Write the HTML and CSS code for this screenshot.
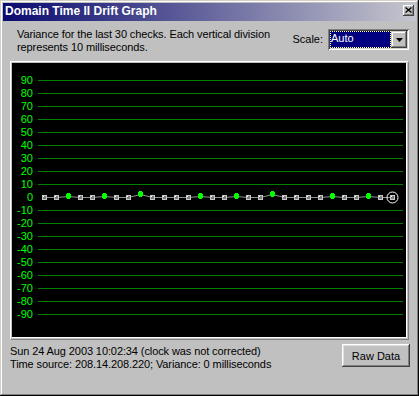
FILE: index.html
```html
<!DOCTYPE html>
<html>
<head>
<meta charset="utf-8">
<link rel="stylesheet" href="styles.css">
</head>
<body>
<div class="window">
  <div class="titlebar">
    <span class="title">Domain Time II Drift Graph</span>
    <span class="close-btn"><svg width="7" height="6" viewBox="0 0 7 6"><path d="M0.5 0.5 L6.5 5.5 M6.5 0.5 L0.5 5.5" stroke="#000" stroke-width="1.3" fill="none"/></svg></span>
  </div>
  <div class="content">
    <div class="header">
      <p class="desc">Variance for the last 30 checks. Each vertical division<br>represents 10 milliseconds.</p>
      <div class="scale">
        <span class="scale-label">Scale:</span>
        <div class="combo">
          <div class="combo-value">Auto</div>
          <div class="combo-btn"><svg width="7" height="4" viewBox="0 0 7 4"><path d="M0 0 H7 L3.5 4 Z" fill="#000"/></svg></div>
        </div>
      </div>
    </div>
    <div class="graph-frame">
      <div class="graph">
        <svg class="plot" width="394" height="274" viewBox="0 0 394 274">
          <defs>
            <g id="sq">
              <rect x="-2" y="-2" width="5" height="5" fill="#c8c8c8"/>
              <rect x="-1" y="-1" width="3" height="3" fill="#7a7a7a"/>
              <rect x="-1" y="-1" width="1" height="1" fill="#ffffff"/>
            </g>
            <g id="gp">
              <rect x="-2" y="-2" width="5" height="4" fill="#00ff00"/>
              <rect x="-1" y="-3" width="3" height="6" fill="#00ff00"/>
            </g>
          </defs>
          <g class="grid" stroke="#008000" stroke-width="1" shape-rendering="crispEdges">
            <line x1="26" y1="17.5" x2="391" y2="17.5"/>
            <line x1="26" y1="30.5" x2="391" y2="30.5"/>
            <line x1="26" y1="43.5" x2="391" y2="43.5"/>
            <line x1="26" y1="56.5" x2="391" y2="56.5"/>
            <line x1="26" y1="69.5" x2="391" y2="69.5"/>
            <line x1="26" y1="82.5" x2="391" y2="82.5"/>
            <line x1="26" y1="95.5" x2="391" y2="95.5"/>
            <line x1="26" y1="108.5" x2="391" y2="108.5"/>
            <line x1="26" y1="121.5" x2="391" y2="121.5"/>
            <line x1="26" y1="147.5" x2="391" y2="147.5"/>
            <line x1="26" y1="160.5" x2="391" y2="160.5"/>
            <line x1="26" y1="173.5" x2="391" y2="173.5"/>
            <line x1="26" y1="186.5" x2="391" y2="186.5"/>
            <line x1="26" y1="199.5" x2="391" y2="199.5"/>
            <line x1="26" y1="212.5" x2="391" y2="212.5"/>
            <line x1="26" y1="225.5" x2="391" y2="225.5"/>
            <line x1="26" y1="238.5" x2="391" y2="238.5"/>
            <line x1="26" y1="251.5" x2="391" y2="251.5"/>
          </g>
          <g class="labels">
            <text x="21" y="21">90</text>
            <text x="21" y="34">80</text>
            <text x="21" y="47">70</text>
            <text x="21" y="60">60</text>
            <text x="21" y="73">50</text>
            <text x="21" y="86">40</text>
            <text x="21" y="99">30</text>
            <text x="21" y="112">20</text>
            <text x="21" y="125">10</text>
            <text x="21" y="138">0</text>
            <text x="21" y="151">-10</text>
            <text x="21" y="164">-20</text>
            <text x="21" y="177">-30</text>
            <text x="21" y="190">-40</text>
            <text x="21" y="203">-50</text>
            <text x="21" y="216">-60</text>
            <text x="21" y="229">-70</text>
            <text x="21" y="242">-80</text>
            <text x="21" y="255">-90</text>
          </g>
          <polyline fill="none" stroke="#909090" stroke-width="1" points="32.5,134.5 44.5,134.5 56.5,133.5 68.5,134.5 80.5,134.5 92.5,133.5 104.5,134.5 116.5,134.5 128.5,131.5 140.5,134.5 152.5,134.5 164.5,134.5 176.5,134.5 188.5,133.5 200.5,134.5 212.5,134.5 224.5,133.5 236.5,134.5 248.5,134.5 260.5,131.5 272.5,134.5 284.5,134.5 296.5,134.5 308.5,134.5 320.5,133.5 332.5,134.5 344.5,134.5 356.5,133.5 368.5,134.5 380.5,134.5"/>
          <use href="#sq" x="32" y="134"/>
          <use href="#sq" x="44" y="134"/>
          <use href="#gp" x="56" y="133"/>
          <use href="#sq" x="68" y="134"/>
          <use href="#sq" x="80" y="134"/>
          <use href="#gp" x="92" y="133"/>
          <use href="#sq" x="104" y="134"/>
          <use href="#sq" x="116" y="134"/>
          <use href="#gp" x="128" y="131"/>
          <use href="#sq" x="140" y="134"/>
          <use href="#sq" x="152" y="134"/>
          <use href="#sq" x="164" y="134"/>
          <use href="#sq" x="176" y="134"/>
          <use href="#gp" x="188" y="133"/>
          <use href="#sq" x="200" y="134"/>
          <use href="#sq" x="212" y="134"/>
          <use href="#gp" x="224" y="133"/>
          <use href="#sq" x="236" y="134"/>
          <use href="#sq" x="248" y="134"/>
          <use href="#gp" x="260" y="131"/>
          <use href="#sq" x="272" y="134"/>
          <use href="#sq" x="284" y="134"/>
          <use href="#sq" x="296" y="134"/>
          <use href="#sq" x="308" y="134"/>
          <use href="#gp" x="320" y="133"/>
          <use href="#sq" x="332" y="134"/>
          <use href="#sq" x="344" y="134"/>
          <use href="#gp" x="356" y="133"/>
          <use href="#sq" x="368" y="134"/>
          <use href="#sq" x="380" y="134"/>
          <circle cx="380.5" cy="134.5" r="5.5" fill="none" stroke="#ffffff" stroke-width="1"/>
        </svg>
      </div>
    </div>
    <div class="footer">
      <p class="status">Sun 24 Aug 2003 10:02:34 (clock was not corrected)<br>Time source: 208.14.208.220; Variance: 0 milliseconds</p>
      <button class="btn">Raw Data</button>
    </div>
  </div>
</div>
</body>
</html>
```

FILE: styles.css
```css
html, body {
  margin: 0;
  padding: 0;
  background: #c0c0c0;
}

body {
  width: 419px;
  height: 396px;
  overflow: hidden;
  font-family: "Liberation Sans", Arial, sans-serif;
  font-size: 11px;
  color: #000;
}

.window {
  box-sizing: border-box;
  width: 419px;
  height: 396px;
  padding: 3px;
  background: #c0c0c0;
  box-shadow: inset -1px -1px #000, inset 1px 1px #d4d0c8, inset -2px -2px #808080, inset 2px 2px #fff;
  display: flex;
  flex-direction: column;
}

.titlebar {
  height: 18px;
  flex: none;
  display: flex;
  align-items: flex-start;
  justify-content: space-between;
  background: linear-gradient(90deg, #0a0a70 0%, #c6c6ce 100%);
  padding: 0 2px 0 2px;
}

.title {
  color: #fff;
  font-weight: bold;
  font-size: 12px;
  line-height: 16px;
}

.close-btn {
  box-sizing: border-box;
  width: 11px;
  height: 11px;
  margin-top: 2px;
  background: #c0c0c0;
  box-shadow: inset -1px -1px #404040, inset 1px 1px #fff, inset -2px -2px #808080;
  display: flex;
  align-items: center;
  justify-content: center;
}

.close-btn svg {
  display: block;
  margin: -1px 0 0 -1px;
}

.content {
  flex: 1;
  padding: 0 7px;
  display: flex;
  flex-direction: column;
}

.header {
  height: 40px;
  flex: none;
  display: flex;
  align-items: flex-start;
}

.desc {
  margin: 7px 0 0 7px;
  line-height: 13px;
  letter-spacing: -0.1px;
}

.scale {
  margin-left: auto;
  margin-top: 8px;
  display: flex;
  align-items: flex-start;
}

.scale-label {
  line-height: 13px;
  padding-top: 4px;
  margin-right: 5px;
}

.combo {
  box-sizing: border-box;
  width: 81px;
  height: 21px;
  padding: 2px;
  background: #fff;
  box-shadow: inset 1px 1px #808080, inset -1px -1px #fff, inset 2px 2px #404040, inset -2px -2px #d4d0c8;
  display: flex;
}

.combo-value {
  flex: 1;
  box-sizing: border-box;
  background: #000080;
  color: #fff;
  border: 1px dotted #ffff80;
  line-height: 13px;
  padding-left: 0;
}

.combo-btn {
  box-sizing: border-box;
  width: 16px;
  background: #c0c0c0;
  box-shadow: inset -1px -1px #404040, inset 1px 1px #d4d0c8, inset -2px -2px #808080, inset 2px 2px #fff;
  display: flex;
  align-items: center;
  justify-content: center;
}

.combo-btn svg {
  display: block;
}

.graph-frame {
  box-sizing: border-box;
  width: 399px;
  height: 279px;
  flex: none;
  border: 1px solid;
  border-color: #fff #808080 #808080 #fff;
  padding: 1px;
}

.graph {
  box-sizing: border-box;
  width: 395px;
  height: 275px;
  background: #000;
  border-right: 1px solid #fff;
  border-bottom: 1px solid #fff;
}

.plot {
  display: block;
}

.labels text {
  font-family: "Liberation Sans", Arial, sans-serif;
  font-size: 11px;
  fill: #00ff00;
  text-anchor: end;
}

.footer {
  display: flex;
  justify-content: space-between;
  align-items: flex-start;
  padding-top: 4px;
}

.status {
  margin: 1px 0 0 0;
  line-height: 13px;
  letter-spacing: -0.1px;
}

.btn {
  box-sizing: border-box;
  width: 68px;
  height: 23px;
  margin: 0 -1px 0 0;
  padding: 0;
  border: none;
  background: #c0c0c0;
  box-shadow: inset -1px -1px #404040, inset 1px 1px #fff, inset -2px -2px #808080, inset 2px 2px #dfdfdf;
  font-family: "Liberation Sans", Arial, sans-serif;
  font-size: 11px;
  color: #000;
}
```
